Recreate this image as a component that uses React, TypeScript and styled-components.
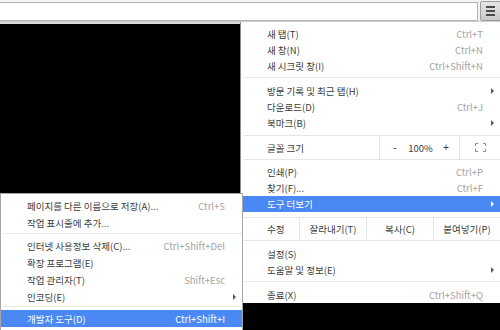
import React from "react";
import styled, { createGlobalStyle } from "styled-components";

const GlobalStyle = createGlobalStyle`
  html, body {
    margin: 0;
    padding: 0;
    background: #000;
    overflow: hidden;
  }
  body {
    width: 500px;
    height: 330px;
    font-family: "Noto Sans CJK KR", "Noto Sans", sans-serif;
  }
`;

type Entry =
  | { kind: "item"; label: string; shortcut?: string; arrow?: boolean; active?: boolean }
  | { kind: "sep"; top: number; bottom: number };

const topItems: Entry[] = [
  { kind: "item", label: "새 탭(T)", shortcut: "Ctrl+T" },
  { kind: "item", label: "새 창(N)", shortcut: "Ctrl+N" },
  { kind: "item", label: "새 시크릿 창(I)", shortcut: "Ctrl+Shift+N" },
  { kind: "sep", top: 3, bottom: 5 },
  { kind: "item", label: "방문 기록 및 최근 탭(H)", arrow: true },
  { kind: "item", label: "다운로드(D)", shortcut: "Ctrl+J" },
  { kind: "item", label: "북마크(B)", arrow: true },
];

const middleItems: Entry[] = [
  { kind: "item", label: "인쇄(P)", shortcut: "Ctrl+P" },
  { kind: "item", label: "찾기(F)...", shortcut: "Ctrl+F" },
  { kind: "item", label: "도구 더보기", arrow: true, active: true },
];

const bottomItems: Entry[] = [
  { kind: "item", label: "설정(S)" },
  { kind: "item", label: "도움말 및 정보(E)", arrow: true },
  { kind: "sep", top: 3, bottom: 5 },
  { kind: "item", label: "종료(X)", shortcut: "Ctrl+Shift+Q" },
];

const subItems: Entry[] = [
  { kind: "item", label: "페이지를 다른 이름으로 저장(A)...", shortcut: "Ctrl+S" },
  { kind: "item", label: "작업 표시줄에 추가..." },
  { kind: "sep", top: 2, bottom: 3 },
  { kind: "item", label: "인터넷 사용정보 삭제(C)...", shortcut: "Ctrl+Shift+Del" },
  { kind: "item", label: "확장 프로그램(E)" },
  { kind: "item", label: "작업 관리자(T)", shortcut: "Shift+Esc" },
  { kind: "item", label: "인코딩(E)", arrow: true },
  { kind: "sep", top: 1, bottom: 3 },
  { kind: "item", label: "개발자 도구(D)", shortcut: "Ctrl+Shift+I", active: true },
];

const MenuList = ({ entries, rowHeight }: { entries: Entry[]; rowHeight: number }) => (
  <>
    {entries.map((e, i) =>
      e.kind === "sep" ? (
        <Separator key={i} $top={e.top} $bottom={e.bottom} />
      ) : (
        <Item key={i} $active={!!e.active} $height={rowHeight}>
          <Label>{e.label}</Label>
          {e.shortcut && <Shortcut $active={!!e.active}>{e.shortcut}</Shortcut>}
          {e.arrow && <Arrow $active={!!e.active} />}
        </Item>
      )
    )}
  </>
);

export default function App() {
  return (
    <>
      <GlobalStyle />
      <Page>
        <Toolbar>
          <Omnibox />
          <MenuButton>
            <Burger>
              <span />
              <span />
              <span />
            </Burger>
          </MenuButton>
        </Toolbar>
        <ToolbarEdge />
        <Content />

        <MainMenu>
          <MenuList entries={topItems} rowHeight={16} />
          <ZoomRow>
            <RowLabel>글꼴 크기</RowLabel>
            <ZoomControls>
              <ZoomBtn>-</ZoomBtn>
              <span>100%</span>
              <ZoomBtn>+</ZoomBtn>
            </ZoomControls>
            <FullscreenCell>
              <svg width="11" height="9" viewBox="0 0 11 9" fill="none" stroke="#8a8a8a" strokeWidth="1">
                <path d="M0.5 3V0.5H3M8 0.5H10.5V3M10.5 6V8.5H8M3 8.5H0.5V6" />
              </svg>
            </FullscreenCell>
          </ZoomRow>
          <MenuList entries={middleItems} rowHeight={16} />
          <EditRow>
            <RowLabel>수정</RowLabel>
            <EditBtn>잘라내기(T)</EditBtn>
            <EditBtn>복사(C)</EditBtn>
            <EditBtn>붙여넣기(P)</EditBtn>
          </EditRow>
          <MenuList entries={bottomItems} rowHeight={16} />
        </MainMenu>

        <SubMenu>
          <MenuList entries={subItems} rowHeight={17} />
        </SubMenu>
      </Page>
    </>
  );
}

const Page = styled.div`
  position: relative;
  width: 500px;
  height: 330px;
  display: flex;
  flex-direction: column;
  background: #000;
  overflow: hidden;
`;

const Toolbar = styled.div`
  height: 21px;
  background: #f4f4f4;
  display: flex;
  align-items: flex-end;
  gap: 2px;
  padding-top: 1px;
  box-sizing: border-box;
`;

const Omnibox = styled.div`
  flex: 1;
  height: 19px;
  background: #fff;
  border: 1px solid #b4b4b4;
  border-left: none;
  box-sizing: border-box;
`;

const MenuButton = styled.div`
  width: 21px;
  height: 20px;
  margin-right: -1px;
  box-sizing: border-box;
  border: 1px solid #9c9c9c;
  border-radius: 2px;
  background: linear-gradient(#e6e6e6, #c9c9c9);
  display: flex;
  align-items: center;
  justify-content: center;
`;

const Burger = styled.div`
  width: 9px;
  display: flex;
  flex-direction: column;
  gap: 2px;
  margin-right: 1px;

  span {
    display: block;
    height: 2px;
    background: #4a4a4a;
  }
`;

const ToolbarEdge = styled.div`
  height: 3px;
  background: linear-gradient(#c9c9c9, #e2e2e2);
`;

const Content = styled.div`
  flex: 1;
  background: #000;
`;

const MainMenu = styled.div`
  position: absolute;
  left: 240px;
  top: 22px;
  width: 260px;
  background: #fff;
  border-left: 1px solid #8c8c8c;
  box-sizing: border-box;
  padding-top: 4px;
  display: flex;
  flex-direction: column;
`;

const SubMenu = styled.div`
  position: absolute;
  left: 0;
  top: 193px;
  width: 243px;
  height: 160px;
  background: #fff;
  border: 1px solid #a6a6a6;
  box-sizing: border-box;
  padding-top: 3px;
  display: flex;
  flex-direction: column;
`;

const Item = styled.div<{ $active: boolean; $height: number }>`
  position: relative;
  height: ${({ $height }) => $height}px;
  display: flex;
  align-items: center;
  padding: 0 17px 0 26px;
  font-size: 9.5px;
  color: ${({ $active }) => ($active ? "#fff" : "#3c3c3c")};
  background: ${({ $active }) => ($active ? "#4a89f3" : "transparent")};
  white-space: nowrap;
`;

const Label = styled.span`
  flex: 1;
`;

const Shortcut = styled.span<{ $active: boolean }>`
  color: ${({ $active }) => ($active ? "#fff" : "#a3a3a3")};
`;

const Arrow = styled.span<{ $active: boolean }>`
  position: absolute;
  right: 6px;
  top: 50%;
  margin-top: -3px;
  width: 0;
  height: 0;
  border-top: 3px solid transparent;
  border-bottom: 3px solid transparent;
  border-left: 3px solid ${({ $active }) => ($active ? "#fff" : "#5a5a5a")};
`;

const Separator = styled.div<{ $top: number; $bottom: number }>`
  height: 1px;
  background: #e8e8e8;
  margin: ${({ $top, $bottom }) => `${$top}px 0 ${$bottom}px 2px`};
`;

const RowLabel = styled.div`
  flex: 1;
  display: flex;
  align-items: center;
  padding-left: 24px;
  font-size: 9.5px;
  color: #3c3c3c;
  white-space: nowrap;
`;

const ZoomRow = styled.div`
  height: 25px;
  margin: 4px 0 4px 2px;
  border-top: 1px solid #e6e6e6;
  border-bottom: 1px solid #e6e6e6;
  box-sizing: border-box;
  display: flex;
  align-items: stretch;
`;

const ZoomControls = styled.div`
  width: 80px;
  border-left: 1px solid #e6e6e6;
  display: flex;
  align-items: center;
  justify-content: space-between;
  padding: 0 9px 0 11px;
  box-sizing: border-box;
  font-size: 9.5px;
  color: #3c3c3c;
`;

const ZoomBtn = styled.span`
  width: 8px;
  text-align: center;
  font-family: "Liberation Sans", sans-serif;
  font-size: 10px;
`;

const FullscreenCell = styled.div`
  width: 40px;
  border-left: 1px solid #e6e6e6;
  display: flex;
  align-items: center;
  justify-content: center;
`;

const EditRow = styled.div`
  height: 24px;
  margin: 5px 0 5px 2px;
  border-top: 1px solid #e6e6e6;
  border-bottom: 1px solid #e6e6e6;
  box-sizing: border-box;
  display: flex;
  align-items: stretch;
`;

const EditBtn = styled.div`
  width: 66px;
  border-left: 1px solid #e6e6e6;
  display: flex;
  align-items: center;
  justify-content: center;
  font-size: 9.5px;
  color: #3c3c3c;
  white-space: nowrap;
`;
